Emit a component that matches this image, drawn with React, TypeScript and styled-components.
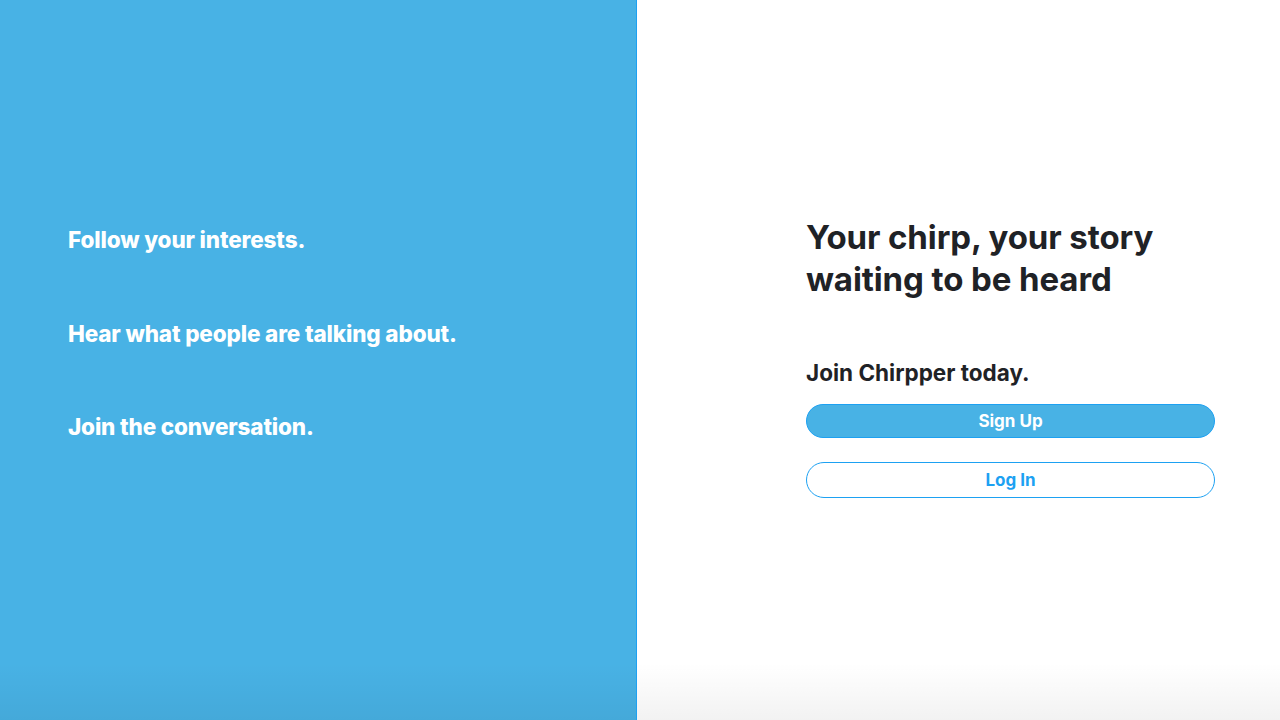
import React from "react";
import styled, { createGlobalStyle } from "styled-components";

const Global = createGlobalStyle`
  html, body { margin: 0; padding: 0; }
  body { font-family: Inter, "Noto Sans", sans-serif; }
  * { box-sizing: border-box; }
`;

const Page = styled.div`
  display: flex;
  width: 1280px;
  height: 720px;
  overflow: hidden;
`;

const Shade = `linear-gradient(to bottom, rgba(0,0,0,0) 92%, rgba(0,0,0,0.05) 100%)`;

const LeftPanel = styled.section`
  width: 637px;
  height: 100%;
  background: ${Shade}, #48b2e5;
  border-right: 1px solid #1da1f2;
  display: flex;
  flex-direction: column;
  justify-content: flex-start;
  padding: 227px 0 0 68px;
  gap: 67px;
`;

const Point = styled.p`
  margin: 0;
  color: #ffffff;
  font-size: 22.5px;
  font-weight: 800;
  line-height: 26.5px;
  letter-spacing: -0.15px;
`;

const RightPanel = styled.section`
  flex: 1;
  height: 100%;
  background: ${Shade}, #ffffff;
  display: flex;
  flex-direction: column;
  justify-content: flex-start;
  padding: 216px 0 0 169px;
`;

const Content = styled.div`
  width: 409px;
  display: flex;
  flex-direction: column;
`;

const Headline = styled.h1`
  margin: 0;
  color: #1f2226;
  font-size: 33px;
  font-weight: 700;
  line-height: 42px;
  letter-spacing: -0.1px;
`;

const Subhead = styled.h2`
  margin: 59px 0 0;
  color: #1f2226;
  font-size: 22.5px;
  font-weight: 700;
  line-height: 28px;
  letter-spacing: 0;
`;

const Button = styled.button<{ $filled?: boolean }>`
  width: 409px;
  height: ${(p) => (p.$filled ? "34px" : "36px")};
  border-radius: 18px;
  border: 1px solid #1da1f2;
  background: ${(p) => (p.$filled ? "#48b2e5" : "#ffffff")};
  color: ${(p) => (p.$filled ? "#ffffff" : "#1da1f2")};
  font-family: Inter, "Noto Sans", sans-serif;
  font-size: 17px;
  font-weight: 700;
  cursor: pointer;
  padding: 0;
`;

const Buttons = styled.div`
  margin-top: 17px;
  display: flex;
  flex-direction: column;
  gap: 24px;
`;

export default function App() {
  return (
    <>
      <Global />
      <Page>
        <LeftPanel>
          <Point>Follow your interests.</Point>
          <Point>Hear what people are talking about.</Point>
          <Point>Join the conversation.</Point>
        </LeftPanel>
        <RightPanel>
          <Content>
            <Headline>
              Your chirp, your story
              <br />
              waiting to be heard
            </Headline>
            <Subhead>Join Chirpper today.</Subhead>
            <Buttons>
              <Button $filled>Sign Up</Button>
              <Button>Log In</Button>
            </Buttons>
          </Content>
        </RightPanel>
      </Page>
    </>
  );
}
